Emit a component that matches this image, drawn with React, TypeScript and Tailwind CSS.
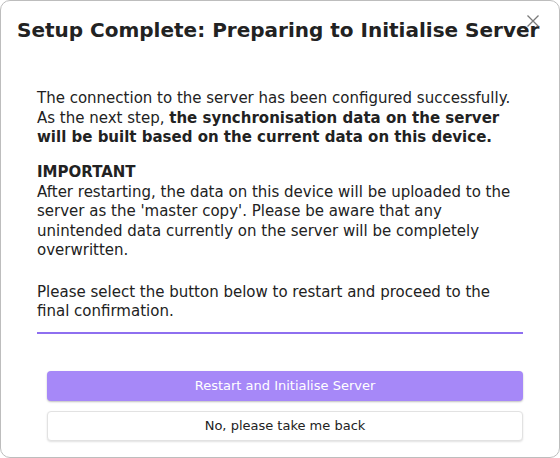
import React from "react";

export default function App() {
  return (
    <div className="w-[560px] h-[458px] bg-white" style={{ fontFamily: '"DejaVu Sans", sans-serif' }}>
      <div className="relative w-full h-full border border-[#bdbdbd] rounded-[10px] bg-white text-[#222222] overflow-hidden">
        <button className="absolute right-[16px] top-[10px] w-[20px] h-[20px] flex items-center justify-center text-[#777]">
          <svg width="14" height="14" viewBox="0 0 14 14" fill="none" stroke="#7a7a7a" strokeWidth="1.3">
            <path d="M1.5 1.5 L12.5 12.5 M12.5 1.5 L1.5 12.5" />
          </svg>
        </button>
        <h1 className="pl-[16px] pt-[16px] text-[20px] leading-[26px] font-bold whitespace-nowrap">
          Setup Complete: Preparing to Initialise Server
        </h1>
        <div className="mt-[46px] ml-[36px] w-[486px] text-[15px] leading-[19.5px]">
          <p>
            The connection to the server has been configured successfully. As the next step,{" "}
            <b>the synchronisation data on the server will be built based on the current data on this device.</b>
          </p>
          <p className="mt-[15.5px]">
            <b>IMPORTANT</b>
            <br />
            After restarting, the data on this device will be uploaded to the server as the 'master copy'. Please be
            aware that any unintended data currently on the server will be completely overwritten.
          </p>
          <p className="mt-[22px]">
            Please select the button below to restart and proceed to the final confirmation.
          </p>
          <div className="mt-[10px] h-[2px] bg-[#8e6ff0]" />
        </div>
        <div className="mt-[37px] ml-[46px] w-[476px] flex flex-col gap-[10px]">
          <button className="h-[30px] rounded-[4px] bg-[#a688f8] text-white text-[13px] shadow-[0_1px_2px_rgba(0,0,0,0.25)]">
            Restart and Initialise Server
          </button>
          <button className="h-[30px] rounded-[4px] bg-white border border-[#e2e2e2] text-[#222] text-[13px] shadow-[0_1px_2px_rgba(0,0,0,0.12)]">
            No, please take me back
          </button>
        </div>
      </div>
    </div>
  );
}
